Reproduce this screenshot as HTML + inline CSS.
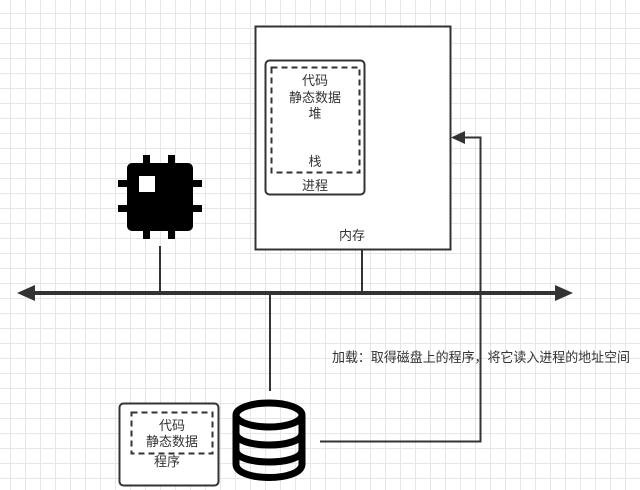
<!DOCTYPE html>
<html><head><meta charset="utf-8"><style>
html,body{margin:0;padding:0;background:#fff}
body{width:640px;height:490px;overflow:hidden;position:relative;
background-image:linear-gradient(to right,#e6e6e6 1px,transparent 1px),linear-gradient(to bottom,#e6e6e6 1px,transparent 1px);
background-size:15px 15px;background-position:10px 13px}
svg{position:absolute;left:0;top:0}
text{font-family:"Liberation Sans","Noto Sans CJK SC",sans-serif;font-size:13px;fill:#333}
</style></head><body>
<svg width="640" height="490" viewBox="0 0 640 490">
<rect x="255.5" y="26.5" width="195" height="223" fill="#fff" stroke="#333" stroke-width="2"/>
<rect x="265.5" y="60.5" width="99" height="134" rx="4" fill="#fff" stroke="#333" stroke-width="2"/>
<rect x="271.5" y="67.5" width="88" height="105" fill="none" stroke="#333" stroke-width="2" stroke-dasharray="6,4"/>
<text x="315" y="85" text-anchor="middle">代码</text>
<text x="315" y="102" text-anchor="middle">静态数据</text>
<text x="315" y="118" text-anchor="middle">堆</text>
<text x="315" y="166" text-anchor="middle">栈</text>
<text x="315" y="190" text-anchor="middle">进程</text>
<text x="352" y="240" text-anchor="middle">内存</text>
<line x1="32" y1="293" x2="558" y2="293" stroke="#333" stroke-width="4"/>
<polygon points="17,293 35,285 35,301" fill="#333"/>
<polygon points="573,293 555,285 555,301" fill="#333"/>
<line x1="160" y1="246" x2="160" y2="293" stroke="#333" stroke-width="2"/>
<line x1="362" y1="250" x2="362" y2="293" stroke="#333" stroke-width="2"/>
<line x1="270" y1="293" x2="270" y2="391" stroke="#333" stroke-width="2"/>
<polyline points="320,441.5 480.5,441.5 480.5,137.5 463,137.5" fill="none" stroke="#333" stroke-width="2"/>
<polygon points="451,137.5 465,131 465,144" fill="#333"/>
<text x="332" y="362" style="font-size:13.5px" textLength="298" lengthAdjust="spacingAndGlyphs">加载：取得磁盘上的程序，将它读入进程的地址空间</text>
<rect x="127" y="163" width="66" height="68" rx="5" fill="#000"/>
<rect x="143" y="155" width="7" height="10" fill="#000"/>
<rect x="168" y="155" width="7" height="10" fill="#000"/>
<rect x="143" y="229" width="7" height="10" fill="#000"/>
<rect x="168" y="229" width="7" height="10" fill="#000"/>
<rect x="118" y="180" width="11" height="7" fill="#000"/>
<rect x="118" y="205" width="11" height="7" fill="#000"/>
<rect x="191" y="180" width="11" height="7" fill="#000"/>
<rect x="191" y="205" width="11" height="7" fill="#000"/>
<rect x="139" y="176" width="16" height="16" fill="#fff"/>
<rect x="119.5" y="403.5" width="99" height="82" rx="4" fill="#fff" stroke="#333" stroke-width="2"/>
<rect x="131.5" y="412.5" width="81" height="41" fill="none" stroke="#333" stroke-width="2" stroke-dasharray="6,4"/>
<text x="172" y="430" text-anchor="middle">代码</text>
<text x="172" y="446" text-anchor="middle">静态数据</text>
<text x="167" y="466" text-anchor="middle">程序</text>
<g fill="none" stroke="#000" stroke-width="7">
<ellipse cx="269" cy="415" rx="33" ry="12"/>
<path d="M236,415 V464 C236,482 302,482 302,464 V415"/>
<path d="M236,433 C236,449 302,449 302,433"/>
<path d="M236,450 C236,466 302,466 302,450"/>
</g>
</svg>
</body></html>
